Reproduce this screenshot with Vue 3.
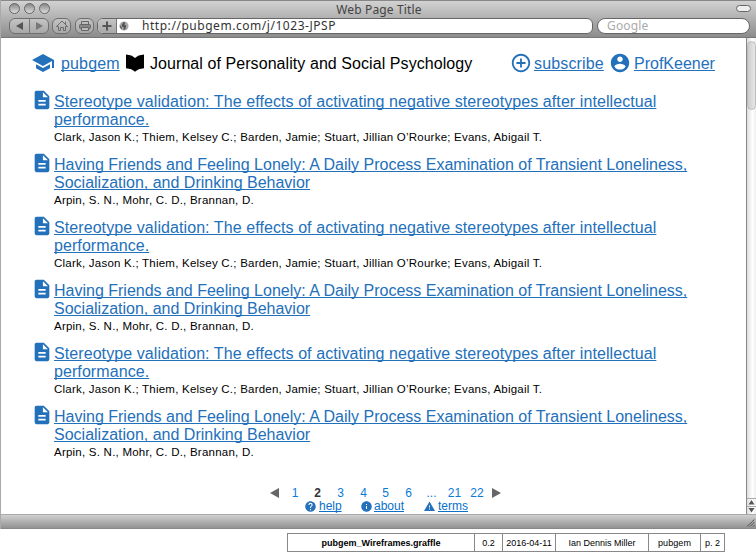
<script setup>
const articles = Array.from({ length: 6 }, (_, i) =>
  i % 2 === 0
    ? {
        kind: 'validation',
        first: 'Stereotype validation: The effects of activating negative stereotypes after intellectual',
        second: 'performance.',
        authors: 'Clark, Jason K.; Thiem, Kelsey C.; Barden, Jamie; Stuart, Jillian O’Rourke; Evans, Abigail T.',
      }
    : {
        kind: 'friends',
        first: 'Having Friends and Feeling Lonely: A Daily Process Examination of Transient Loneliness,',
        second: 'Socialization, and Drinking Behavior',
        authors: 'Arpin, S. N., Mohr, C. D., Brannan, D.',
      }
)
const pages = ['1', '2', '3', '4', '5', '6', '...', '21', '22']
</script>

<template>
  <div class="page">
    <div class="browser">
      <header class="chrome">
        <div class="titlebar">
          <div class="lights"><i></i><i></i><i></i></div>
          <span class="wintitle">Web Page Title</span>
          <i class="pill"></i>
        </div>
        <div class="toolbar">
          <div class="btn nav">
            <svg width="40" height="16" viewBox="0 0 40 16"><path d="M20.500 0v16" stroke="#777" /><path d="M7 8l7-4v8z" fill="#555" /><path d="M34 8l-7-4v8z" fill="#777" /></svg>
          </div>
          <div class="btn small">
            <svg width="18" height="16" viewBox="0 0 18 16" fill="none" stroke="#6c6c6c"><path d="M3.500 8.500L9 3l5.500 5.500H12.500v4h-2v-3h-3v3H5.500v-4zM12.500 6V3.500" /></svg>
          </div>
          <div class="btn small print">
            <svg width="18" height="16" viewBox="0 0 18 16" fill="none" stroke="#666"><path d="M5.500 6V3.500h7V6" /><rect x="3.500" y="6.500" width="11" height="4" rx="1" fill="#888" /><path d="M5.500 9.500h7v3h-7z" fill="#bbb" /></svg>
          </div>
          <div class="address">
            <div class="plus"><svg width="18" height="14" viewBox="0 0 18 14"><path d="M4.500 7h9M9 2.500v9" stroke="#555" stroke-width="2" /></svg></div>
            <svg class="globe" width="10" height="10" viewBox="0 0 11 11"><circle cx="5.500" cy="5.500" r="5" fill="#aaa" /><path d="M5 1l2 1-1 2 2 1-1 4-2 1V7L3 6V4zM1 5l2 2v2L1 7z" fill="#555" /></svg>
            <span class="url">http://pubgem.com/j/1023-JPSP</span>
          </div>
          <div class="search">Google</div>
        </div>
      </header>

      <div class="body">
        <main>
          <div class="top">
            <svg class="school" width="24" height="24" viewBox="0 0 24 24"><path d="M5 13.180v4L12 21l7-3.820v-4L12 17l-7-3.820zM12 3L1 9l11 6 9-4.910V17h2V9L12 3z" /></svg>
            <a class="brand">pubgem</a>
            <svg class="book" width="18" height="18" viewBox="0 0 18 18"><path d="M0 .5C4 .8 7 2 9 4C11 2 14 .8 18 .5V14.200C14 14.500 11 15.700 9 17.700C7 15.700 4 14.500 0 14.200z" /></svg>
            <span class="journal">Journal of Personality and Social Psychology</span>
            <svg class="sub-icon" width="22" height="22" viewBox="0 0 24 24"><path d="M13 7h-2v4H7v2h4v4h2v-4h4v-2h-4V7zm-1-5C6.480 2 2 6.480 2 12s4.480 10 10 10 10-4.480 10-10S17.520 2 12 2zm0 18c-4.410 0-8-3.590-8-8s3.590-8 8-8 8 3.590 8 8-3.590 8-8 8z" /></svg>
            <a class="subscribe">subscribe</a>
            <svg class="user-icon" width="22" height="22" viewBox="0 0 24 24"><path d="M12 2C6.480 2 2 6.480 2 12s4.480 10 10 10 10-4.480 10-10S17.520 2 12 2zm0 3c1.660 0 3 1.340 3 3s-1.340 3-3 3-3-1.340-3-3 1.340-3 3-3zm0 14.200c-2.500 0-4.710-1.280-6-3.220.03-1.990 4-3.080 6-3.080 1.990 0 5.970 1.090 6 3.080-1.290 1.940-3.500 3.220-6 3.220z" /></svg>
            <a class="user">ProfKeener</a>
          </div>

          <article v-for="(a, i) in articles" :key="i" :class="a.kind">
            <svg width="22" height="22" viewBox="0 0 24 24"><path d="M14 2H6c-1.100 0-1.990.9-1.990 2L4 20c0 1.100.89 2 1.990 2H18c1.100 0 2-.9 2-2V8l-6-6zm2 16H8v-2h8v2zm0-4H8v-2h8v2zm-3-5V3.500L18.500 9H13z" /></svg>
            <div>
              <a class="l1">{{ a.first }}</a>
              <a class="l2">{{ a.second }}</a>
              <p>{{ a.authors }}</p>
            </div>
          </article>

          <nav class="pager">
            <svg width="9" height="10" viewBox="0 0 9 10"><path d="M9 0v10L0 5z" /></svg>
            <span v-for="p in pages" :key="p" :class="{ current: p === '2' }">{{ p }}</span>
            <svg width="9" height="10" viewBox="0 0 9 10"><path d="M0 0v10l9-5z" /></svg>
          </nav>
          <nav class="links">
            <svg width="11" height="11" viewBox="1.500 1.500 21 21"><path d="M12 2C6.480 2 2 6.480 2 12s4.480 10 10 10 10-4.480 10-10S17.520 2 12 2zm1 17h-2v-2h2v2zm2.070-7.750l-.9.920C13.450 12.900 13 13.500 13 15h-2v-.5c0-1.100.45-2.100 1.170-2.830l1.240-1.260c.37-.36.59-.86.59-1.410 0-1.100-.9-2-2-2s-2 .9-2 2H8c0-2.210 1.790-4 4-4s4 1.790 4 4c0 .88-.36 1.680-.93 2.250z" /></svg>
            <a class="help">help</a>
            <svg width="11" height="11" viewBox="1.500 1.500 21 21"><path d="M12 2C6.480 2 2 6.480 2 12s4.480 10 10 10 10-4.480 10-10S17.520 2 12 2zm1 15h-2v-6h2v6zm0-8h-2V7h2v2z" /></svg>
            <a class="about">about</a>
            <svg width="11" height="11" viewBox="1 1 22 22"><path d="M1 21h22L12 2 1 21zm12-3h-2v-2h2v2zm0-4h-2v-4h2v4z" /></svg>
            <a class="terms">terms</a>
          </nav>
        </main>
        <aside class="scroll">
          <i class="thumb"></i>
          <svg width="9" height="16" viewBox="0 0 9 16"><path d="M0 .5h9M0 8.500h9" stroke="#aaa" /><path d="M4.500 2L7.500 6.500H1.500zM4.500 14.500L7.500 10H1.500z" fill="#555" /></svg>
        </aside>
      </div>
      <div class="status">
        <svg width="9" height="9" viewBox="0 0 9 9"><path d="M1 8.500l7.500-7M4 8.500L8.500 4M7 8.500L8.500 7" stroke="#555" /></svg>
      </div>
    </div>
    <footer>
      <b><span class="f1">pubgem_Wireframes.graffle</span></b><div><span class="f2">0.2</span></div><div><span class="f3">2016-04-11</span></div><div><span class="f4">Ian Dennis Miller</span></div><div><span class="f5">pubgem</span></div><div><span class="f6">p. 2</span></div>
    </footer>
  </div>
</template>

<style>
body { background: #fff; }
</style>

<style scoped>
* { box-sizing: border-box; }
.page { width: 756px; height: 554px; overflow: hidden; font-family: "Liberation Sans", Arial, sans-serif; color: #000; }
svg { display: block; flex: none; }
a { color: #2370bb; text-decoration: underline; text-decoration-thickness: 1px; text-underline-offset: 1px; text-decoration-skip-ink: none; white-space: nowrap; }
.browser { height: 529px; border-left: 1px solid #aaa; }
.chrome { height: 38px; background: linear-gradient(#d2d2d2, #8c8c8c); border-top: 1px solid #888; border-bottom: 1px solid #777; font-family: "Noto Sans", sans-serif; }
.titlebar { height: 17px; display: grid; grid-template-columns: 1fr auto 1fr; align-items: center; padding: 0 5px 0 8px; }
.lights { display: flex; gap: 4px; margin-top: -2px; }
.lights i { width: 11px; height: 11px; border: 1px solid #666; border-radius: 50%; background: linear-gradient(#888, #ddd); }
.wintitle { font-size: 12px; line-height: 17px; color: #444; letter-spacing: .15px; margin-right: 2px; }
.pill { justify-self: end; width: 15px; height: 7px; border: 1px solid #666; border-radius: 4px; background: #eee; margin-top: -2px; }
.toolbar { display: flex; padding-left: 8px; height: 16px; }
.btn { height: 16px; border: 1px solid #6f6f6f; border-radius: 6px; background: linear-gradient(#c4c4c4, #a8a8a8); display: flex; align-items: center; justify-content: center; }
.nav { width: 40px; margin-right: 3px; }
.small { width: 19px; margin-right: 4px; }
.print { margin-right: 4px; }
.address { width: 496px; height: 16px; display: flex; align-items: center; background: #fff; border: 1px solid #666; border-radius: 6px; overflow: hidden; margin-left: -1px; }
.plus { width: 19px; height: 14px; border-right: 1px solid #777; background: linear-gradient(#c4c4c4, #a8a8a8); }
.globe { margin-left: 2px; }
.url { margin-left: 13px; font-size: 12px; line-height: 14px; color: #333; letter-spacing: .54px; }
.search { margin-left: 4px; width: 153px; height: 16px; background: #fff; border: 1px solid #666; border-radius: 8px; padding-left: 9px; font-size: 12px; line-height: 14px; color: #aaa; letter-spacing: .15px; }
.body { display: flex; height: 476px; }
main { width: 745px; }
.top { display: flex; align-items: center; height: 55px; padding: 0 0 5px 30px; fill: #2370bb; font-size: 16px; white-space: nowrap; }
.top a, .journal { padding-top: 2px; }
.brand { width: 60px; margin-left: 6px; letter-spacing: .15px; }
.book { fill: #000; margin-left: 5px; }
.journal { width: 322px; margin-left: 6px; letter-spacing: .07px; }
.sub-icon { margin-left: 38px; }
.subscribe { width: 70px; margin-left: 2px; letter-spacing: .15px; }
.user-icon { margin-left: 5px; }
.user { margin-left: 3px; }
article { display: flex; height: 63px; padding-left: 30px; }
article svg { margin: -4px 1px 0 0; fill: #2370bb; }
article a { display: block; width: max-content; font-size: 16px; line-height: 18px; }
.validation a { letter-spacing: .08px; }
article p { margin: 0; font-size: 11.5px; line-height: 16px; letter-spacing: .23px; white-space: nowrap; }
.pager { display: grid; grid-template-columns: 10px 31px 14px 32px 14px 30px 16px 30px 16px 29px 10px; height: 14px; align-items: center; width: max-content; margin: 15px 0 0 269px; fill: #666; font-size: 12px; color: #0a7ad8; text-align: center; line-height: 14px; }
.pager span { margin-left: -1px; }
.pager .current { color: #333; font-weight: bold; }
.links { display: flex; align-items: center; height: 13px; margin-left: 304px; fill: #2370bb; font-size: 12px; line-height: 13px; }
.links a { margin-left: 3px; color: #0a70c8; text-underline-offset: 1px; }
.links .about { margin-left: 2px; }
.links svg { margin-top: -1px; }
.help { width: 42px; }
.about { width: 50px; }
.scroll { width: 10px; border-left: 1px solid #888; background: linear-gradient(90deg, #ddd, #fff 60%, #eee); display: flex; flex-direction: column; justify-content: space-between; }
.thumb { height: 69px; margin-top: 3px; border: 1px solid #bbb; border-radius: 5px; background: linear-gradient(90deg, #ccc, #e8e8e8); }
.status { height: 15px; border-top: 1px solid #aaa; border-bottom: 1px solid #888; background: linear-gradient(#d0d0d0, #929292); display: flex; justify-content: flex-end; align-items: flex-end; padding: 0 1px 1px 0; }
footer { margin: 4px 0 0 287px; width: 438px; height: 19px; display: grid; grid-template-columns: 186px 28px 53px 93px 52px 24px; border: 1px solid #888; font-size: 9px; line-height: 18px; text-align: center; white-space: nowrap; }
footer > * + * { border-left: 1px solid #888; }
.f5 { letter-spacing: .1px; }
</style>
